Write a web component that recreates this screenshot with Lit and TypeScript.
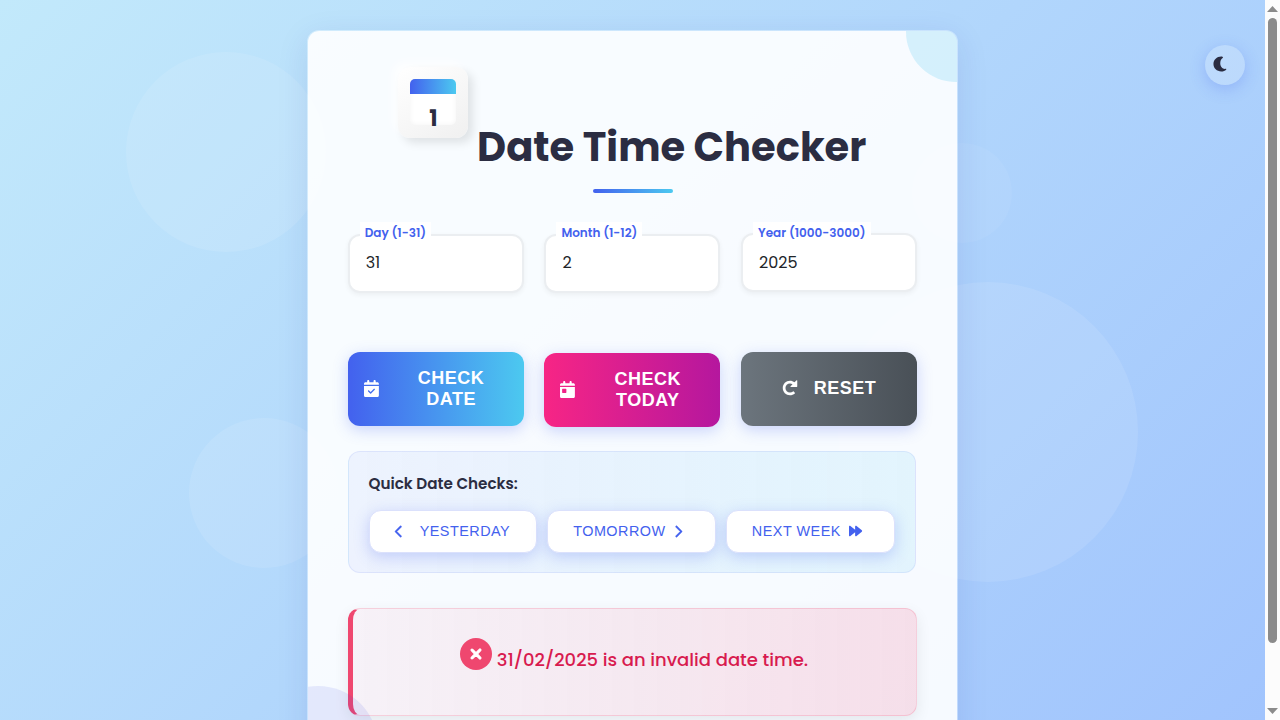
import { LitElement, html, svg, css } from "lit";
import { customElement } from "lit/decorators.js";

const CAL =
  "M128 0c17.7 0 32 14.3 32 32V64H288V32c0-17.7 14.3-32 32-32s32 14.3 32 32V64h48c26.5 0 48 21.5 48 48v32H0V112C0 85.5 21.5 64 48 64H96V32c0-17.7 14.3-32 32-32zM0 180H448V464c0 26.5-21.5 48-48 48H48c-26.5 0-48-21.5-48-48V180z";

// Each glyph: view box width, outline, extra stroke weight.
const ICONS: Record<string, [number, string, number]> = {
  check: [448, CAL + "M325 295c8-8 8-20 0-28s-20-8-28 0l-97 97-49-49c-8-8-20-8-28 0s-8 20 0 28l63 63c8 8 20 8 28 0L325 295z", 0],
  day: [448, CAL + "M80 236c-8.8 0-16 7.2-16 16v96c0 8.8 7.2 16 16 16h96c8.8 0 16-7.2 16-16V252c0-8.8-7.2-16-16-16H80z", 0],
  redo: [512, "M488 20V208c0 9-7 16-16 16H286c-14 0-21-17-11-27l62-62c-23-16-51-25-81-25C175 110 110 175 110 256s65 146 146 146c36 0 70-13 96-36 6-5 15-5 21 1l38 38c7 7 6 18-1 24-41 37-95 59-154 59C127 488 24 385 24 256S127 24 256 24c54 0 103 18 143 49l61-61c10-10 28-6 28 8z", 0],
  left: [320, "M9.4 233.4c-12.5 12.5-12.5 32.8 0 45.3l192 192c12.5 12.5 32.8 12.5 45.3 0s12.5-32.8 0-45.3L77.3 256 246.6 86.6c12.5-12.5 12.5-32.8 0-45.3s-32.8-12.5-45.3 0l-192 192z", 16],
  right: [320, "M310.6 233.4c12.5 12.5 12.5 32.8 0 45.3l-192 192c-12.5 12.5-32.8 12.5-45.3 0s-12.5-32.8 0-45.3L242.7 256 73.4 86.6c-12.5-12.5-12.5-32.8 0-45.3s32.8-12.5 45.3 0l192 192z", 16],
  forward: [512, "M52.5 440.6c-9.5 7.9-22.8 9.7-34.1 4.4S0 428.4 0 416V96C0 83.6 7.2 72.3 18.4 67s24.5-3.6 34.1 4.4L224 214.3V96c0-12.4 7.2-23.7 18.4-29s24.5-3.6 34.1 4.4l192 160c7.3 6.1 11.5 15.1 11.5 24.6s-4.2 18.5-11.5 24.6l-192 160c-9.5 7.9-22.8 9.7-34.1 4.4s-18.4-16.6-18.4-29V297.7L52.5 440.6z", 0],
  moon: [440, "M262 18C125 18 14 124 14 256s111 238 248 238c67 0 122-24 158-58 12-12 3-28-13-25C312 427 232 350 232 243c0-76 22-140 76-178 18-13 14-37-7-43-10-3-28-4-39-4z", 0],
  xmark: [384, "M342.6 150.6c12.5-12.5 12.5-32.8 0-45.3s-32.8-12.5-45.3 0L192 210.7 86.6 105.4c-12.5-12.5-32.8-12.5-45.3 0s-12.5 32.8 0 45.3L146.7 256 41.4 361.4c-12.5 12.5-12.5 32.8 0 45.3s32.8 12.5 45.3 0L192 301.3 297.4 406.6c12.5 12.5 32.8 12.5 45.3 0s12.5-32.8 0-45.3L237.3 256 342.6 150.6z", 36],
};

const icon = (name: string, size = 16) => {
  const [w, d, weight] = ICONS[name];
  return html`<svg class="icon" width=${(w / 512) * size} height=${size} viewBox="0 0 ${w} 512">
    ${svg`<path fill="currentColor" stroke="currentColor" stroke-width=${weight} fill-rule="evenodd" d=${d}></path>`}
  </svg>`;
};

@customElement("app-root")
export class AppRoot extends LitElement {
  static styles = css`
    :host {
      display: flex;
      width: 1280px;
      height: 720px;
      overflow: hidden;
      font-family: Poppins, Inter, sans-serif;
      color: #2b2d42;
    }
    * { box-sizing: border-box; }
    .icon { display: block; flex: none; overflow: visible; }
    .page {
      position: relative;
      width: 1265px;
      height: 720px;
      overflow: hidden;
      display: flex;
      justify-content: center;
      align-items: flex-start;
      padding-top: 30.4px;
      background: linear-gradient(135deg, #c2e9fb 0%, #a1c4fd 100%);
    }
    .bubble {
      position: absolute;
      border-radius: 50%;
      background: rgba(255, 255, 255, 0.1);
    }
    .b1 { left: 126px; top: 52px; width: 200px; height: 200px; }
    .b2 { left: 838px; top: 282px; width: 300px; height: 300px; }
    .b3 { left: 189px; top: 418px; width: 150px; height: 150px; }
    .b4 { left: 912px; top: 143px; width: 100px; height: 100px; background: rgba(255, 255, 255, 0.05); }
    .card {
      position: relative;
      width: 651px;
      height: 777px;
      flex: none;
      margin-right: 1px;
      padding: 36px 40px;
      border: 1px solid rgba(255, 255, 255, 0.3);
      border-radius: 12px;
      background: rgba(255, 255, 255, 0.9);
      box-shadow: 0 8px 32px rgba(31, 38, 135, 0.1);
      background-clip: padding-box;
      overflow: hidden;
    }
    .corner-top {
      position: absolute;
      top: -50px;
      right: -50px;
      width: 100.5px;
      height: 100.5px;
      border-radius: 50%;
      background: rgba(76, 201, 240, 0.2);
    }
    .corner-bottom {
      position: absolute;
      bottom: 0;
      left: -50px;
      width: 120px;
      height: 120px;
      border-radius: 50%;
      background: rgba(63, 65, 225, 0.1);
    }
    .header { height: 166px; }
    .brand { display: flex; padding-left: 50px; gap: 9.6px; }
    .logo {
      width: 70px;
      height: 71px;
      padding: 12px;
      border-radius: 12px;
      background: linear-gradient(145deg, #ffffff, #f0f0f0);
      box-shadow: 5px 5px 10px rgba(0, 0, 0, 0.1), -5px -5px 10px rgba(255, 255, 255, 0.8);
    }
    .sheet {
      width: 46px;
      height: 46px;
      border-radius: 5px;
      background: #fff;
      box-shadow: inset 0 0 5px rgba(0, 0, 0, 0.05);
    }
    .sheet-top { height: 15px; border-radius: 5px 5px 0 0; background: linear-gradient(90deg, #4361ee, #4cc9f0); }
    .sheet-day {
      padding: 8px 0 0 2px;
      line-height: 34px;
      text-align: center;
      font-size: 22px;
      font-weight: 700;
    }
    h1 {
      margin: 50px 0 0;
      font-size: 40px;
      line-height: 60px;
      font-weight: 700;
      white-space: nowrap;
    }
    .rule {
      width: 80px;
      height: 4px;
      margin: 12px 0 0 245px;
      border-radius: 2px;
      background: linear-gradient(90deg, #4361ee, #4cc9f0);
    }
    .grid { display: grid; grid-template-columns: repeat(3, 176px); gap: 20.7px; padding-left: 0.2px; }
    .field {
      position: relative;
      height: 59px;
      margin-top: 1px;
      padding: 0 16px;
      border: 2px solid #ebeef1;
      border-radius: 12px;
      background: #fff;
      box-shadow: 0 2px 5px rgba(0, 0, 0, 0.05);
      font-size: 16px;
      line-height: 53px;
      color: #212529;
    }
    .label {
      position: absolute;
      left: 10px;
      top: -14px;
      height: 21px;
      padding: 0 5px;
      line-height: 21px;
      background: #fff;
      color: #4361ee;
      font-size: 12px;
      font-weight: 600;
      white-space: nowrap;
    }
    .field.raised { margin: 0 0 1px; line-height: 55px; }
    .raised .label { top: -13px; }
    .actions { margin-top: 59px; }
    .btn {
      height: 74px;
      display: flex;
      align-items: center;
      padding: 0 16px;
      border-radius: 12px;
      color: #fff;
      box-shadow: 0 4px 15px rgba(67, 97, 238, 0.25);
      font: 700 18px/21px "Liberation Sans", Arial, sans-serif;
      letter-spacing: 0.5px;
      text-align: center;
    }
    .btn .icon { margin-bottom: 2px; }
    .btn span { flex: 1; padding-left: 16px; }
    .blue { background: linear-gradient(90deg, #4361ee, #4cc9f0); }
    .pink { background: linear-gradient(90deg, #f72585, #b5179e); position: relative; top: 1px; }
    .gray { background: linear-gradient(90deg, #6c757d, #495057); justify-content: center; gap: 16px; }
    .gray span { flex: none; padding: 0 0 2px; }
    .quick {
      margin-top: 25px;
      width: 568px;
      height: 122px;
      padding: 19px 20px;
      border: 1px solid rgba(67, 97, 238, 0.1);
      border-radius: 12px;
      background: linear-gradient(90deg, rgba(67, 97, 238, 0.06), rgba(76, 201, 240, 0.12));
    }
    .quick-title { font-size: 15.2px; line-height: 26px; font-weight: 600; }
    .quick-row { display: grid; grid-template-columns: repeat(3, 1fr); gap: 10px; margin-top: 13px; }
    .mini {
      height: 43px;
      display: flex;
      align-items: center;
      padding: 0 25px;
      border: 1px solid #dbe1fc;
      border-radius: 12px;
      background: #fff;
      box-shadow: 0 4px 15px rgba(67, 97, 238, 0.25);
      color: #4361ee;
      font: 400 14.4px/16px "Liberation Sans", Arial, sans-serif;
      letter-spacing: 0.5px;
    }
    .mini span { margin-bottom: 1px; }
    .mini .icon { margin-bottom: 1px; }
    .wide { gap: 17px; }
    .tight { gap: 8px; }
    .result {
      margin-top: 35px;
      width: 569px;
      height: 108px;
      display: flex;
      justify-content: center;
      gap: 5px;
      border: 1px solid rgba(239, 71, 111, 0.2);
      border-left: 5px solid #ef476f;
      border-radius: 12px;
      background: linear-gradient(90deg, rgba(239, 71, 111, 0.05), rgba(239, 71, 111, 0.15));
      box-shadow: 0 5px 15px rgba(0, 0, 0, 0.08);
      color: #d81b4f;
      font-size: 18px;
      font-weight: 500;
      line-height: 28px;
      white-space: nowrap;
    }
    .badge {
      width: 32px;
      height: 32px;
      margin-top: 29px;
      display: flex;
      align-items: center;
      justify-content: center;
      border-radius: 50%;
      background: #ef476f;
      color: #fff;
    }
    .message { margin-top: 37px; }
    .theme {
      position: absolute;
      left: 1205px;
      top: 45px;
      width: 40px;
      height: 40px;
      display: flex;
      align-items: center;
      padding: 0 0 2px 8px;
      border-radius: 50%;
      background: rgba(255, 255, 255, 0.2);
      box-shadow: 0 4px 15px rgba(67, 97, 238, 0.25);
    }
    .scroll {
      width: 15px;
      height: 720px;
      display: flex;
      flex-direction: column;
      align-items: center;
      padding: 6px 0;
      background: #fcfcfc;
      color: #8b8b8b;
    }
    .thumb { width: 9px; height: 625px; margin: 6px 0 65px; border-radius: 5px; background: #8b8b8b; }
    .arrow { display: block; }
  `;

  render() {
    return html`
      <div class="page">
        <div class="bubble b1"></div>
        <div class="bubble b2"></div>
        <div class="bubble b3"></div>
        <div class="bubble b4"></div>
        <main class="card">
          <div class="corner-top"></div>
          <header class="header">
            <div class="brand">
              <div class="logo"><div class="sheet"><div class="sheet-top"></div><div class="sheet-day">1</div></div></div>
              <h1>Date Time Checker</h1>
            </div>
            <div class="rule"></div>
          </header>
          <div class="grid">
            <div class="field"><span class="label">Day (1-31)</span>31</div>
            <div class="field"><span class="label">Month (1-12)</span>2</div>
            <div class="field raised"><span class="label">Year (1000-3000)</span>2025</div>
          </div>
          <div class="grid actions">
            <div class="btn blue">${icon("check", 17)}<span>CHECK DATE</span></div>
            <div class="btn pink">${icon("day", 17)}<span>CHECK TODAY</span></div>
            <div class="btn gray">${icon("redo")}<span>RESET</span></div>
          </div>
          <section class="quick">
            <div class="quick-title">Quick Date Checks:</div>
            <div class="quick-row">
              <div class="mini wide">${icon("left", 13)}<span>YESTERDAY</span></div>
              <div class="mini tight"><span>TOMORROW</span>${icon("right", 13)}</div>
              <div class="mini tight"><span>NEXT WEEK</span>${icon("forward", 14)}</div>
            </div>
          </section>
          <section class="result">
            <div class="badge">${icon("xmark")}</div>
            <div class="message">31/02/2025 is an invalid date time.</div>
          </section>
          <div class="corner-bottom"></div>
        </main>
        <div class="theme">${icon("moon")}</div>
      </div>
      <div class="scroll">
        <svg class="arrow" width="11" height="6" viewBox="0 0 11 6"><path fill="currentColor" d="M5.5 0L11 6H0z"></path></svg>
        <div class="thumb"></div>
        <svg class="arrow" width="11" height="6" viewBox="0 0 11 6"><path fill="currentColor" d="M0 0H11L5.5 6z"></path></svg>
      </div>
    `;
  }
}
